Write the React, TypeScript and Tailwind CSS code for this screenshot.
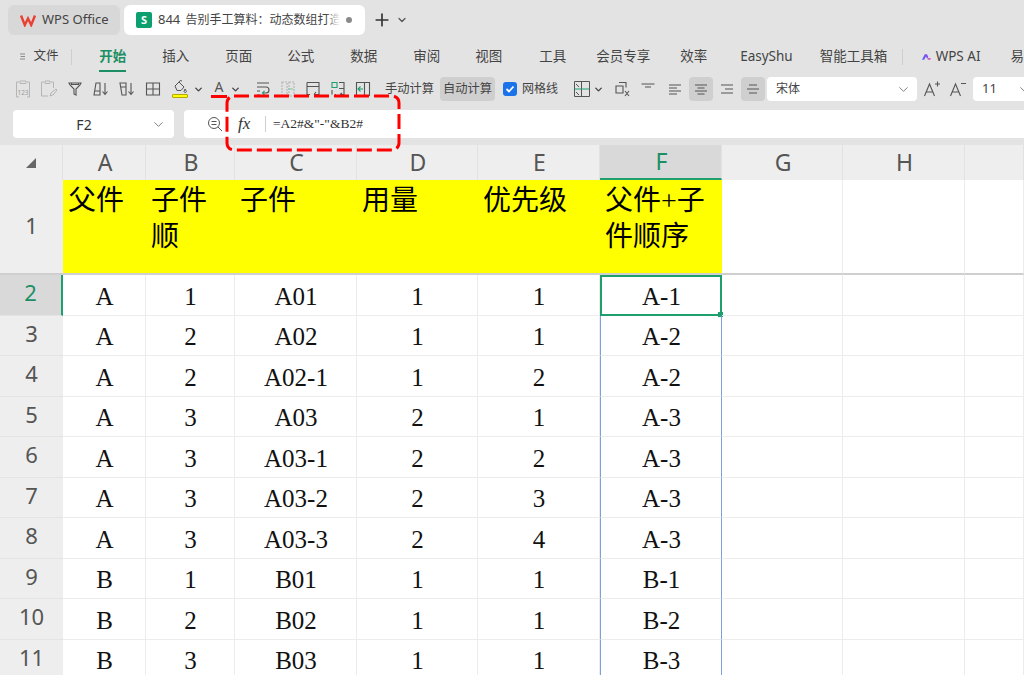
import { ChevronDown, Plus } from "lucide-react"
import type { ReactNode } from "react"

const uiFont = "font-['Noto_Sans','Noto_Sans_CJK_SC',sans-serif]"
const cellFont = "font-['Liberation_Serif','Noto_Sans_CJK_SC',serif]"

const menus = [
	{ label: "开始", className: "font-bold text-[#1d8f65]" },
	{ label: "插入", className: "" },
	{ label: "页面", className: "" },
	{ label: "公式", className: "ml-[-1px]" },
	{ label: "数据", className: "" },
	{ label: "审阅", className: "" },
	{ label: "视图", className: "ml-[-1px]" },
	{ label: "工具", className: "ml-[1px]" },
	{ label: "会员专享", className: "ml-[-6px]" },
	{ label: "效率", className: "ml-[-6px]" },
	{ label: "EasyShu", className: "ml-[-3px]" },
	{ label: "智能工具箱", className: "ml-[-9px]" },
]
const columns = ["A", "B", "C", "D", "E", "F", "G", "H", ""]
const headings = ["父件", "子件顺", "子件", "用量", "优先级", "父件+子件顺序", "", "", ""]
const rows = [
	["A", "1", "A01", "1", "1", "A-1"],
	["A", "2", "A02", "1", "1", "A-2"],
	["A", "2", "A02-1", "1", "2", "A-2"],
	["A", "3", "A03", "2", "1", "A-3"],
	["A", "3", "A03-1", "2", "2", "A-3"],
	["A", "3", "A03-2", "2", "3", "A-3"],
	["A", "3", "A03-3", "2", "4", "A-3"],
	["B", "1", "B01", "1", "1", "B-1"],
	["B", "2", "B02", "1", "1", "B-2"],
	["B", "3", "B03", "1", "1", "B-3"],
]

function Svg({ children, size = 18 }: { children: ReactNode; size?: number }) {
	return (
		<svg width={size} height={size} viewBox="0 0 18 18" fill="none" stroke="#555" strokeWidth="1.1">
			{children}
		</svg>
	)
}

function Tool({ children, className = "w-[25px]" }: { children: ReactNode; className?: string }) {
	return <div className={`flex h-6 shrink-0 items-center justify-center ${className}`}>{children}</div>
}

function Caret({ className = "ml-[3px]" }: { className?: string }) {
	return <ChevronDown className={`h-[11px] w-[11px] text-[#444] ${className}`} strokeWidth={3} />
}

function Sheet() {
	return (
		<div className={`grid grid-cols-[63px_83px_89px_122px_121px_122px_122px_121px_122px_59px] bg-white text-black ${cellFont}`}>
			<div className="flex h-[35px] items-center justify-center border-r border-[#e2e2e2] bg-[#eeeeee]">
				<svg width="12" height="12" viewBox="0 0 12 12" className="mt-[1px]">
					<path d="M11 1v10H1z" fill="#666" />
				</svg>
			</div>
			{columns.map((col, i) => (
				<div
					key={i}
					className={`flex h-[35px] items-center justify-center border-r border-[#e2e2e2] pl-[2px] text-[23px] ${uiFont} ${
						col === "F" ? "border-b-2 border-b-[#1d9f6e] bg-[#d9d9d9] text-[#1d8f65]" : "bg-[#eeeeee] text-[#555]"
					}`}
				>
					{col}
				</div>
			))}

			<div className={`flex h-[95px] items-center justify-center border-b-2 border-[#cfcfcf] bg-[#eeeeee] pb-[3px] text-[22px] text-[#555] ${uiFont}`}>
				1
			</div>
			{headings.map((text, i) => (
				<div
					key={i}
					className={`h-[95px] border-b-2 border-[#cfcfcf] pl-[5px] pt-[3px] text-[28px] leading-[36px] ${
						i < 6 ? "bg-[#ffff00]" : "border-r border-r-[#ececec] bg-white"
					}`}
				>
					<div className={i === 1 ? "w-[60px]" : i === 5 ? "w-[105px]" : "whitespace-nowrap"}>{text}</div>
				</div>
			))}

			{rows.map((row, r) => (
				<div key={r} className="contents">
					<div
						className={`flex h-[40.5px] items-center justify-center border-b border-[#e4e4e4] pb-[4px] text-[22px] ${uiFont} ${
							r === 0 ? "border-r-2 border-r-[#1d9f6e] bg-[#d9d9d9] text-[#1d8f65]" : "bg-[#eeeeee] text-[#555]"
						}`}
					>
						{r + 2}
					</div>
					{columns.map((_, c) => {
						const selected = c === 5 && r === 0
						const inRange = c === 5 && r > 0
						return (
							<div
								key={c}
								className={`relative flex h-[40.5px] items-center justify-center whitespace-nowrap pl-[1px] pt-[3px] text-[25px] text-[#111] ${
									selected
										? "border-2 border-[#1d9f6e]"
										: inRange
											? "border-x border-b border-x-[#7f9fdc] border-b-[#ececec]"
											: "border-b border-r border-[#ececec]"
								}`}
							>
								{row[c] ?? ""}
								{selected && <span className="absolute -bottom-[3px] -right-[3px] h-[5px] w-[5px] bg-[#1d9f6e]" />}
							</div>
						)
					})}
				</div>
			))}
		</div>
	)
}

export default function App() {
	return (
		<div className={`relative h-[675px] w-[1024px] overflow-hidden bg-[#e3e3e3] text-[#333] ${uiFont}`}>
			{/* tabs */}
			<div className="flex h-[40px] items-start pl-[8px] pt-[5px]">
				<div className="flex h-[30px] w-[112px] items-center gap-[6px] rounded-[6px] bg-[#d8d8d8] pl-[12px] text-[13px] text-[#444]">
					<svg width="16" height="13" viewBox="0 0 16 13" fill="none" stroke="#ea3f33" strokeWidth="2.4">
						<path d="M1 1.5l3.8 9.5L8 4.5l3.2 6.5L15 1.5" />
					</svg>
					WPS Office
				</div>
				<div className="ml-[4px] flex h-[30px] w-[241px] items-center rounded-[6px] bg-white pl-[12px] text-[12px] text-[#444]">
					<div className="flex h-4 w-4 shrink-0 items-center justify-center rounded-[2px] bg-[#0e9f6e] text-[11px] font-bold text-white">S</div>
					<div className="relative ml-[6px] w-[182px] overflow-hidden whitespace-nowrap">
						<span className="mr-[2px] text-[13px]">844</span> 告别手工算料：动态数组打造
						<span className="absolute inset-y-0 right-0 w-[14px] bg-gradient-to-r from-transparent to-white" />
					</div>
					<span className="ml-[6px] h-[6px] w-[6px] rounded-full bg-[#8a8a8a]" />
				</div>
				<Plus className="ml-[7px] mt-[5px] h-[20px] w-[20px] text-[#333]" strokeWidth={2} />
				<ChevronDown className="ml-[4px] mt-[9px] h-3 w-3 text-[#555]" strokeWidth={2.5} />
			</div>

			{/* menu */}
			<div className="flex h-[33px] items-center whitespace-nowrap text-[13.5px] text-[#444]">
				<svg width="10" height="11" viewBox="0 0 10 11" stroke="#444" className="ml-[20px]">
					<path d="M0 1h9M1 5.5h8M0 10h9" />
				</svg>
				<span className="ml-[8px] text-[12.5px]">文件</span>
				<span className="ml-[12px] h-4 w-px bg-[#cfcfcf]" />
				<div className="ml-[28px] flex gap-[36px]">
					{menus.map((m, i) => (
						<div key={m.label} className={`relative ${m.className}`}>
							{m.label}
							{i === 0 && <span className="absolute -bottom-[5px] left-0 h-[2px] w-full bg-[#1d8f65]" />}
						</div>
					))}
				</div>
				<span className="ml-[15px] h-4 w-px bg-[#cfcfcf]" />
				<svg width="16" height="12" viewBox="0 0 16 12" className="ml-[19px]">
					<defs>
						<linearGradient id="wpsai" x1="0" x2="1">
							<stop offset="0" stopColor="#3b6cf6" />
							<stop offset="0.55" stopColor="#8a4df0" />
							<stop offset="1" stopColor="#ff5aa5" />
						</linearGradient>
					</defs>
					<path d="M0 11L5 1h4l2.500 5-2 3.500L7 5l-3 6zM10 11l1.500-3H16l-1 3z" fill="url(#wpsai)" />
				</svg>
				<span className="ml-[5px]">WPS AI</span>
				<span className="ml-[30px]">易</span>
			</div>

			{/* toolbar */}
			<div className="flex h-[32px] items-center whitespace-nowrap pl-[10px] text-[12.25px] text-[#444]">
				<Tool className="w-[26px]">
					<svg width="16" height="18" viewBox="0 0 16 18" fill="none" stroke="#b5b5b5">
						<path d="M4 2H1.500v15H4M12 2h2.500v15H12M5 1h6v2.500H5z" />
						<text x="8" y="15" fontSize="6.500" textAnchor="middle" fill="#999" stroke="none">123</text>
					</svg>
				</Tool>
				<Tool className="w-[26px]">
					<svg width="18" height="18" viewBox="0 0 18 18" fill="none" stroke="#b5b5b5">
						<path d="M4 2H1.500v14H8M11 2h2.500v6M5 1h5v2.500H5zM10 16l1-3 5-4 1 1-4 5z" />
					</svg>
				</Tool>
				<Tool className="w-[26px]">
					<Svg>
						<path d="M3 3h12l-1 2-4 4v6l-2-1V9L4 5zM5.500 3v1.500h7V3" />
					</Svg>
				</Tool>
				<Tool className="w-[26px]">
					<Svg>
						<path d="M4 3h4v12H2zM3 11h5M13 3v11M10.500 11.500L13 14.500l2.500-3" />
					</Svg>
				</Tool>
				<Tool className="w-[26px]">
					<Svg>
						<path d="M2 3h6v12H4zM2.800 7H8M13 3v11M10.500 11.500L13 14.500l2.500-3" />
					</Svg>
				</Tool>
				<Tool className="w-[26px]">
					<Svg>
						<path d="M2.500 3h13v12h-13zM9 3v12M2.500 9h13" />
					</Svg>
				</Tool>
				<Tool className="w-[40px] pl-[4px]">
					<div className="relative h-[18px] w-[16px]">
						<svg width="16" height="14" viewBox="0 0 16 14" fill="none" stroke="#555">
							<path d="M3 6l4-4 5 5-3 3.500H5zM7 2a2 2 0 0 1 3-1M13 9l1.500 2.500a1.300 1.300 0 0 1-2.500 0z" />
						</svg>
						<span className="absolute bottom-0 left-0 h-[4px] w-[16px] rounded-[1px] border border-[#b5a800] bg-[#ffff00]" />
					</div>
					<Caret className="ml-[5px]" />
				</Tool>
				<Tool className="w-[38px] pl-[2px]">
					<div className="relative h-[18px] w-[16px] text-center text-[14px] leading-[14px] text-[#555]">
						A
						<span className="absolute bottom-0 left-0 h-[3px] w-[16px] bg-[#ff0000]" />
					</div>
					<Caret />
				</Tool>
				<div className="w-[6px] shrink-0" />
				<Tool>
					<Svg>
						<path d="M3 3h12M3 7h9a3 3 0 0 1 0 6H9M3 11h3M3 15h3" />
						<path d="M10.500 11l-2 2 2 2" stroke="#1d9f6e" />
					</Svg>
				</Tool>
				<Tool>
					<Svg>
						<path d="M3 2h5v14H3zM10 2h5v14h-5z" stroke="#b5b5b5" strokeDasharray="2 1" />
						<path d="M9 9h5" stroke="#7fc8a9" />
					</Svg>
				</Tool>
				<Tool>
					<Svg>
						<path d="M3 2.500h12v12h-5M3 2.500v12h3M15 6.500H3" />
						<path d="M12 12l-2 2.500" />
					</Svg>
				</Tool>
				<Tool>
					<Svg>
						<path d="M3 2.500h5v5H3z" stroke="#1d9f6e" />
						<path d="M10 2.500h5v12h-4M3 10v4.500M6 14.500h1M10 8.500h5M13 13l-2 1.500" />
					</Svg>
				</Tool>
				<Tool>
					<Svg>
						<path d="M2.500 2.500h13v13h-13zM10.500 2.500v13" />
						<path d="M9 9H4M6.500 6.500L4 9l2.500 2.500" stroke="#1d9f6e" />
					</Svg>
				</Tool>
				<span className="ml-[10px] w-[49px] shrink-0">手动计算</span>
				<div className="ml-[6px] flex h-6 w-[55px] shrink-0 items-center justify-center rounded-[4px] bg-[#cfcfcf]">自动计算</div>
				<div className="ml-[8px] flex h-[14px] w-[14px] shrink-0 items-center justify-center rounded-[3px] bg-[#1a73e8]">
					<svg width="10" height="10" viewBox="0 0 10 10" fill="none" stroke="#fff" strokeWidth="1.800">
						<path d="M1.500 5l2.500 2.500 4.500-5" />
					</svg>
				</div>
				<span className="ml-[5px] w-[36px] shrink-0 text-[12px]">网格线</span>
				<Tool className="ml-[16px] w-[30px]">
					<svg width="16" height="16" viewBox="0 0 16 16" fill="none" stroke="#555">
						<path d="M.5.500h15v15H.500zM7.500.500v15" />
						<path d="M.5 8h15" stroke="#1d9f6e" />
						<path d="M2 3l3 3M2 11l3 3" />
					</svg>
					<Caret />
				</Tool>
				<Tool className="ml-[6px] w-[24px]">
					<Svg>
						<path d="M6 2.500h7v5M3 6h7v7H3z" />
						<path d="M12 11l4 5M16 11l-4 5" />
					</Svg>
				</Tool>
				<Tool className="ml-[2px] w-[24px]">
					<Svg>
						<path d="M2.500 4h13M6 7h6" />
					</Svg>
				</Tool>
				<Tool className="ml-[3px] w-[24px]">
					<Svg>
						<path d="M3 5h12M3 8h8M3 11h12M3 14h8" />
					</Svg>
				</Tool>
				<Tool className="ml-[2px] w-[24px] rounded-[4px] bg-[#cfcfcf]">
					<Svg>
						<path d="M3 5h12M5.500 8h7M3 11h12M5.500 14h7" />
					</Svg>
				</Tool>
				<Tool className="ml-[2px] w-[24px]">
					<Svg>
						<path d="M3 5h12M7 9h8M3 13h12" />
					</Svg>
				</Tool>
				<Tool className="ml-[2px] w-[24px] rounded-[4px] bg-[#cfcfcf]">
					<Svg>
						<path d="M5 5h8M3 9h12M5 13h8" />
					</Svg>
				</Tool>
				<div className="ml-[2px] flex h-6 w-[150px] shrink-0 items-center justify-between rounded-[4px] bg-white pl-[9px] pr-[6px] text-[12px]">
					宋体
					<ChevronDown className="h-[15px] w-[15px] text-[#777]" strokeWidth={1.5} />
				</div>
				<Tool className="ml-[3px] w-[24px]">
					<Svg>
						<path d="M1.500 16L6.500 4l5 12M3.500 12h6M12 4h5M14.500 1.500v5" />
					</Svg>
				</Tool>
				<Tool className="ml-[2px] w-[24px]">
					<Svg>
						<path d="M1.500 16L6.500 4l5 12M3.500 12h6M12 3.500h5" />
					</Svg>
				</Tool>
				<div className="ml-[3px] flex h-6 w-[60px] shrink-0 items-center rounded-[4px] bg-white pl-[9px] text-[13px]">
					11
					<ChevronDown className="ml-[20px] h-[15px] w-[15px] text-[#777]" strokeWidth={1.5} />
				</div>
			</div>

			{/* formula bar */}
			<div className="flex h-[40px] items-start pl-[13px] pt-[5px]">
				<div className="flex h-[28px] w-[161px] items-center rounded-[4px] bg-white text-[14px] text-[#333]">
					<span className="w-[138px] pl-[4px] text-center">F2</span>
					<ChevronDown className="h-[15px] w-[15px] text-[#777]" strokeWidth={1.5} />
				</div>
				<div className="ml-[10px] flex h-[28px] flex-1 items-center rounded-l-[4px] bg-white">
					<svg width="16" height="16" viewBox="0 0 16 16" fill="none" stroke="#555" className="ml-[23px]">
						<circle cx="7" cy="7" r="5.500" />
						<path d="M4.500 5.500h5M4.500 8.500h5M11 11l4 4" />
					</svg>
					<span className="ml-[15px] w-[27px] font-['Liberation_Serif',serif] text-[17px] italic text-[#333]">fx</span>
					<span className="h-4 w-px bg-[#cfcfcf]" />
					<span className="ml-[7px] font-['Liberation_Serif','Noto_Sans_CJK_SC',serif] text-[13.5px] text-[#333]">=A2#&amp;"-"&amp;B2#</span>
				</div>
			</div>

			<Sheet />

			{/* red annotation */}
			<svg width="176" height="58" viewBox="0 0 176 58" fill="none" className="absolute left-[225px] top-[94px]">
				<rect x="2" y="2" width="172" height="54" rx="7" stroke="#ff0000" strokeWidth="3" strokeDasharray="15 5" />
			</svg>
		</div>
	)
}
